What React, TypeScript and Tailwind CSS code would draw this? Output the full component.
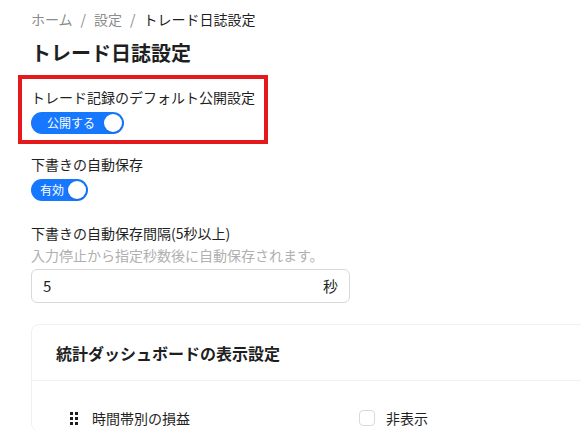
import React from "react";

const font = { fontFamily: '"Noto Sans CJK JP", "Noto Sans", sans-serif' };

type ToggleProps = { label: string; width: string; pad: string };

const Toggle = ({ label, width, pad }: ToggleProps) => (
  <div
    className={`flex h-[22px] items-center justify-between rounded-full bg-[#1677ff] pr-[2px] ${width} ${pad}`}
  >
    <span className="text-[12px] leading-none text-white">{label}</span>
    <span className="h-[18px] w-[18px] rounded-full bg-white shadow-sm" />
  </div>
);

const DragHandle = () => (
  <svg width="10" height="14" viewBox="0 0 10 14" fill="#1f1f1f">
    <rect x="1" y="1" width="3" height="3" />
    <rect x="6" y="1" width="3" height="3" />
    <rect x="1" y="6" width="3" height="3" />
    <rect x="6" y="6" width="3" height="3" />
    <rect x="1" y="11" width="3" height="3" />
    <rect x="6" y="11" width="3" height="3" />
  </svg>
);

export default function App() {
  return (
    <div
      className="h-[430px] w-[581px] overflow-hidden bg-white pl-[31px] pt-[8px] text-[#1f1f1f]"
      style={font}
    >
      {/* Breadcrumb */}
      <nav className="flex items-center text-[14px] leading-[22px]">
        <span className="text-[#8c8c8c]">ホーム</span>
        <span className="mx-[8px] text-[#8c8c8c]">/</span>
        <span className="text-[#8c8c8c]">設定</span>
        <span className="mx-[8px] text-[#8c8c8c]">/</span>
        <span>トレード日誌設定</span>
      </nav>

      <h1 className="mt-[9px] text-[20px] font-bold leading-[28px]">トレード日誌設定</h1>

      {/* highlighted setting */}
      <div className="-ml-[13px] mt-[8px] w-[250px] border-4 border-[#e4191c] pb-[6px] pl-[9px] pt-[7px]">
        <div className="text-[14px] leading-[22px]">トレード記録のデフォルト公開設定</div>
        <div className="mt-[4px]">
          <Toggle label="公開する" width="w-[93px]" pad="pl-[16px]" />
        </div>
      </div>

      <div className="mt-[9px] text-[14px] leading-[22px]">下書きの自動保存</div>
      <div className="mt-[4px]">
        <Toggle label="有効" width="w-[57px]" pad="pl-[9px]" />
      </div>

      <div className="mt-[21px] text-[14px] leading-[22px]">下書きの自動保存間隔(5秒以上)</div>
      <div className="text-[14px] leading-[22px] text-[#b0b0b0]">
        入力停止から指定秒数後に自動保存されます。
      </div>
      <div className="mt-[3px] flex h-[34px] w-[319px] items-center justify-between rounded-[6px] border border-[#d9d9d9] pl-[11px] pr-[11px] text-[15px]">
        <span>5</span>
        <span>秒</span>
      </div>

      {/* Dashboard card */}
      <div className="mt-[21px] w-[640px] rounded-[8px] border border-[#f0f0f0]">
        <div className="flex h-[56px] items-center border-b border-[#f0f0f0] px-[24px] text-[16px] font-bold">
          統計ダッシュボードの表示設定
        </div>
        <div className="px-[24px] pt-[24px]">
          <div className="flex h-[26px] items-center pl-[13px] text-[14px]">
            <DragHandle />
            <span className="ml-[13px] w-[267px]">時間帯別の損益</span>
            <span className="h-[16px] w-[16px] rounded-[4px] border border-[#d9d9d9]" />
            <span className="ml-[11px]">非表示</span>
          </div>
        </div>
      </div>
    </div>
  );
}
